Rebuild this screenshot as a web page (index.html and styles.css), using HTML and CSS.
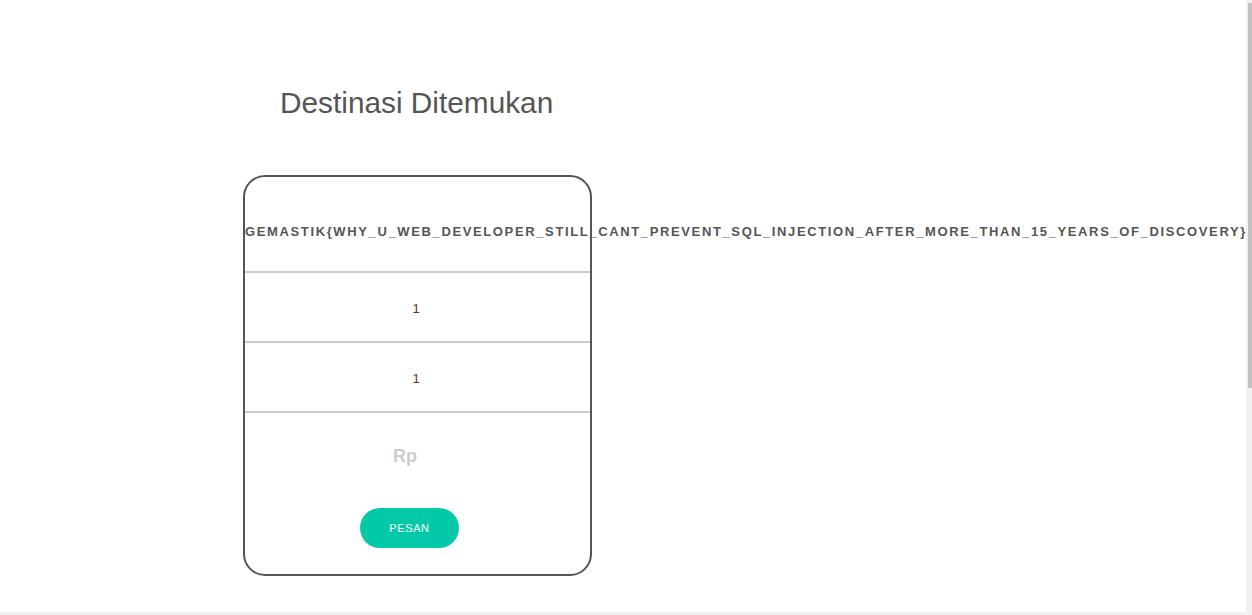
FILE: index.html
```html
<!DOCTYPE html>
<html>
<head>
<meta charset="utf-8">
<link rel="stylesheet" href="styles.css">
</head>
<body>
<main class="page">
  <h1 class="title">Destinasi Ditemukan</h1>
  <div class="card">
    <div class="row row-name">GEMASTIK{WHY_U_WEB_DEVELOPER_STILL_CANT_PREVENT_SQL_INJECTION_AFTER_MORE_THAN_15_YEARS_OF_DISCOVERY}</div>
    <div class="row row-num">1</div>
    <div class="row row-num">1</div>
    <div class="row row-price">
      <div class="price">Rp</div>
      <button class="btn">PESAN</button>
    </div>
  </div>
</main>
<div class="vscroll"><div class="vthumb"></div></div>
<div class="hscroll"></div>
</body>
</html>
```

FILE: styles.css
```css
html, body {
  margin: 0;
  padding: 0;
  background: #fff;
  font-family: "Liberation Sans", Arial, sans-serif;
  overflow: hidden;
}
.page {
  padding: 86px 0 30px 243px;
}
.title {
  margin: 0 0 55px 37px;
  font-weight: normal;
  font-size: 29.8px;
  line-height: 34px;
  color: #555;
}
.card {
  width: 345px;
  border: 2px solid #555;
  border-radius: 22px;
}
.row {
  text-align: center;
  white-space: nowrap;
  border-bottom: 2px solid #cbcbcb;
}
.row-name {
  height: 94px;
  line-height: 110px;
  font-size: 13px;
  font-weight: bold;
  letter-spacing: 1.63px;
  color: #555;
}
.row-num {
  height: 68px;
  line-height: 72px;
  font-size: 13px;
  color: #6b2b2b;
  padding-right: 3px;
}
.row-price {
  border-bottom: none;
  height: 161px;
  display: flex;
  flex-direction: column;
  align-items: center;
}
.price {
  margin-top: 33px;
  margin-right: 25px;
  font-size: 18px;
  font-weight: bold;
  color: #ccc;
  line-height: 20px;
}
.btn {
  margin-top: 42px;
  margin-right: 16px;
  width: 99px;
  height: 40px;
  border: none;
  border-radius: 20px;
  background: #04c9a9;
  color: #fff;
  font-family: "Liberation Sans", Arial, sans-serif;
  font-size: 11px;
  letter-spacing: 0.6px;
  cursor: pointer;
}
.vscroll {
  position: fixed;
  top: 0;
  right: 0;
  width: 6px;
  height: 612px;
  background: #f1f1f1;
}
.vthumb {
  margin: 3px 0 0 2px;
  width: 4px;
  height: 385px;
  background: #c1c1c1;
}
.hscroll {
  position: fixed;
  left: 0;
  bottom: 0;
  width: 100%;
  height: 3px;
  background: #f0f0f0;
}
```
